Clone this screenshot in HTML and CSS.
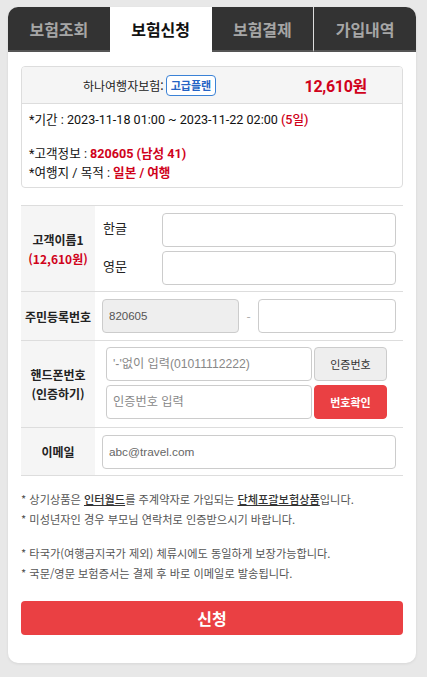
FILE: index.html
```html
<!DOCTYPE html>
<html lang="ko">
<head>
<meta charset="utf-8">
<title>보험신청</title>
<link rel="stylesheet" href="styles.css">
</head>
<body>
<div class="card">
  <nav class="tabs">
    <div class="tab">보험조회</div>
    <div class="tab active">보험신청</div>
    <div class="tab">보험결제</div>
    <div class="tab last">가입내역</div>
  </nav>
  <div class="body">
    <section class="info">
      <div class="info-head">
        <div class="plan">하나여행자보험: <span class="badge">고급플랜</span></div>
        <div class="price">12,610원</div>
      </div>
      <div class="info-body">
        <p>*기간 : 2023-11-18 01:00 ~ 2023-11-22 02:00 <span class="red b5">(5일)</span></p>
        <p class="gap">*고객정보 : <span class="red b7">820605 (남성 41)</span></p>
        <p>*여행지 / 목적 : <span class="red b7">일본 / 여행</span></p>
      </div>
    </section>

    <div class="form">
      <div class="row row-name">
        <div class="th"><div>고객이름1<br><span class="red">(12,610원)</span></div></div>
        <div class="td name-grid">
          <span class="sub">한글</span><input class="inp" type="text">
          <span class="sub">영문</span><input class="inp" type="text">
        </div>
      </div>
      <div class="row row-jumin">
        <div class="th"><div>주민등록번호</div></div>
        <div class="td jumin">
          <input class="inp disabled" type="text" value="820605" disabled>
          <span class="dash">-</span>
          <input class="inp" type="text">
        </div>
      </div>
      <div class="row row-phone">
        <div class="th"><div>핸드폰번호<br>(인증하기)</div></div>
        <div class="td phone">
          <input class="inp big" type="text" placeholder="'-'없이 입력(01011112222)">
          <button class="btn gray">인증번호</button>
          <input class="inp big" type="text" placeholder="인증번호 입력">
          <button class="btn red-btn">번호확인</button>
        </div>
      </div>
      <div class="row row-email">
        <div class="th"><div>이메일</div></div>
        <div class="td email">
          <input class="inp" type="text" value="abc@travel.com">
        </div>
      </div>
    </div>

    <div class="notes">
      <p>* 상기상품은 <u>인터월드</u>를 주계약자로 가입되는 <u>단체포괄보험상품</u>입니다.</p>
      <p>* 미성년자인 경우 부모님 연락처로 인증받으시기 바랍니다.</p>
      <p class="gap2">* 타국가(여행금지국가 제외) 체류시에도 동일하게 보장가능합니다.</p>
      <p>* 국문/영문 보험증서는 결제 후 바로 이메일로 발송됩니다.</p>
    </div>

    <button class="submit">신청</button>
  </div>
</div>
</body>
</html>
```

FILE: styles.css
```css
* { box-sizing: border-box; }
html, body { margin: 0; padding: 0; }
body {
  background: #e8e8e8;
  font-family: "Noto Sans CJK KR", "Noto Sans", sans-serif;
  color: #222;
  padding: 7px 11px 12px 8px;
}
p { margin: 0; }
.red { color: #d0021b; }
.b5 { font-weight: 500; }
.b7 { font-weight: 700; }

.card {
  width: 408px;
  background: #fff;
  border-radius: 10px;
  overflow: hidden;
  box-shadow: 0 1px 3px rgba(0,0,0,0.08);
}

.tabs {
  display: flex;
  height: 45px;
}
.tab {
  flex: 1 1 0;
  background: #333;
  color: #a6a6a6;
  font-weight: 700;
  font-size: 16px;
  display: flex;
  align-items: center;
  justify-content: center;
  border-bottom: 2px solid #555;
  padding-top: 1px;
}
.tab.active {
  background: #fff;
  color: #111;
  border-bottom-color: #fff;
}
.tab.last { border-left: 1px solid #ddd; }

.body { padding: 14px 13px 28px 13px; }

.info {
  border: 1px solid #ddd;
  border-radius: 4px;
  overflow: hidden;
}
.info-head {
  height: 37px;
  background: #f5f5f5;
  border-bottom: 1px solid #ddd;
  display: flex;
  align-items: center;
  padding-left: 61px;
  padding-right: 35px;
}
.plan {
  font-size: 12px;
  color: #222;
  display: flex;
  align-items: center;
  gap: 2px;
}
.badge {
  border: 1px solid #3b82d6;
  border-radius: 4px;
  color: #2563c4;
  font-size: 11px;
  font-weight: 700;
  height: 21px;
  padding: 0 4px;
  display: inline-flex;
  align-items: center;
  background: #fff;
}
.price {
  margin-left: auto;
  color: #d0021b;
  font-family: Roboto, "Noto Sans CJK KR", sans-serif;
  font-weight: 700;
  font-size: 16px;
  letter-spacing: -0.3px;
}
.info-body {
  padding: 6px 7px 5px 7px;
  font-family: Roboto, "Noto Sans CJK KR", sans-serif;
  font-size: 12.6px;
  line-height: 19px;
  color: #111;
}
.info-body .gap { margin-top: 15px; }

.form {
  margin-top: 17px;
  border-top: 1px solid #ddd;
}
.row {
  display: flex;
  border-bottom: 1px solid #ddd;
}
.th {
  width: 74px;
  flex: none;
  background: #f5f5f5;
  font-weight: 700;
  font-size: 12px;
  line-height: 19px;
  color: #222;
  display: flex;
  align-items: center;
  justify-content: center;
  text-align: center;
}
.td { flex: 1; }

.inp {
  height: 34px;
  border: 1px solid #ccc;
  border-radius: 4px;
  background: #fff;
  font-family: "Liberation Sans", "Noto Sans CJK KR", sans-serif;
  font-size: 11.5px;
  color: #666;
  padding: 0 6px;
  outline: none;
  width: 100%;
}
.inp::placeholder { color: #888; }
.inp.disabled { background: #eee; color: #555; font-size: 11.5px; }

.name-grid {
  display: grid;
  grid-template-columns: 59px 1fr;
  row-gap: 4px;
  align-items: center;
  padding: 7px 7px 6px 8px;
  font-size: 13px;
}
.sub { position: relative; top: -3px; }

.jumin {
  display: grid;
  grid-template-columns: 137px 19px 1fr;
  align-items: center;
  padding: 7px 7px 7px 7px;
}
.dash { text-align: center; color: #aaa; font-size: 12px; }

.phone {
  display: grid;
  grid-template-columns: 206px 73px;
  column-gap: 2px;
  row-gap: 4px;
  padding: 6px 0 8px 11px;
}
.inp.big { font-size: 12.2px; padding: 0 6px; }
.btn {
  height: 34px;
  border-radius: 4px;
  font-family: inherit;
  font-size: 11px;
  padding: 0;
}
.btn.gray { background: #eee; border: 1px solid #ccc; color: #333; }
.btn.red-btn { background: #ea4043; border: 1px solid #ea4043; color: #fff; font-weight: 700; }

.email { padding: 7px 7px 6px 7px; }
.email .inp { font-size: 11.8px; }

.notes {
  margin-top: 13px;
  font-size: 11.2px;
  line-height: 20px;
  color: #555;
}
.notes u { color: #333; font-weight: 500; }
.notes .gap2 { margin-top: 14px; }

.submit {
  display: block;
  width: 100%;
  height: 34px;
  margin-top: 18px;
  border: none;
  border-radius: 4px;
  background: #ea4043;
  color: #fff;
  font-family: inherit;
  font-weight: 700;
  font-size: 16px;
}
```
